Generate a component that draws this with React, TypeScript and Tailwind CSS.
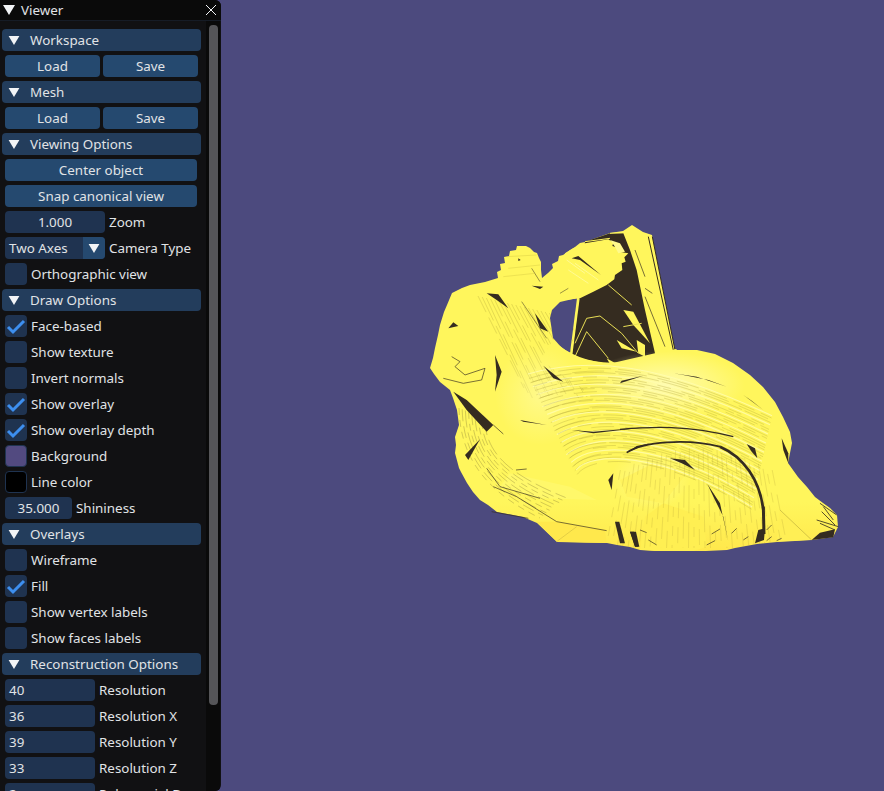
import type { ReactNode } from "react";

// Dear ImGui style "Viewer" panel on top of a mesh viewport.
const DARK = "#352c20";
const YELLOW = "#fff65c";

function Arrow({ className }: { className: string }) {
  return (
    <svg viewBox="0 0 12 10" className={className}>
      <polygon points="0,0 12,0 6,10" fill="#f2f4f6" />
    </svg>
  );
}

function Header({ title }: { title: string }) {
  return (
    <div className="-mx-[3px] flex h-[22px] w-[199px] shrink-0 items-center rounded-[4px] bg-[#233d5c]">
      <Arrow className="ml-[6px] h-[9px] w-[12px]" />
      <span className="ml-[10px] pt-[2px]">{title}</span>
    </div>
  );
}

function Button({ label, className }: { label: string; className: string }) {
  return (
    <div className={`flex h-[22px] shrink-0 items-center justify-center rounded-[4px] bg-[#25496f] pt-[2px] ${className}`}>
      {label}
    </div>
  );
}

function Check({ label, on }: { label: string; on?: boolean }) {
  return (
    <div className="flex h-[22px] shrink-0 items-center">
      <div className="flex h-[22px] w-[22px] items-center justify-center rounded-[4px] bg-[#1f3350]">
        {on && (
          <svg viewBox="0 0 22 22" className="h-[22px] w-[22px]">
            <path d="M3 12 L8 17 L19 6" fill="none" stroke="#3d8fef" strokeWidth="3" />
          </svg>
        )}
      </div>
      <span className="ml-[4px] pt-[2px]">{label}</span>
    </div>
  );
}

function Swatch({ label, className }: { label: string; className: string }) {
  return (
    <div className="flex h-[22px] shrink-0 items-center">
      <div className={`h-[22px] w-[22px] rounded-[4px] border border-[#1f3350] ${className}`} />
      <span className="ml-[4px] pt-[2px]">{label}</span>
    </div>
  );
}

function Field({ value, label, className, center }: { value: string; label: string; className: string; center?: boolean }) {
  return (
    <div className="flex h-[22px] shrink-0 items-center whitespace-nowrap">
      <div className={`flex h-[22px] shrink-0 items-center rounded-[4px] bg-[#1f3350] pt-[2px] ${center ? "justify-center" : "pl-[4px]"} ${className}`}>
        {value}
      </div>
      <span className="ml-[4px] pt-[2px]">{label}</span>
    </div>
  );
}

function Panel() {
  return (
    <aside className="flex h-[791px] w-[221px] shrink-0 flex-col overflow-hidden rounded-r-[6px] bg-[#111113] font-['Noto_Sans',sans-serif] text-[13.4px] leading-none text-[#e0e3e6]">
      <div className="flex h-[21px] shrink-0 items-center border-b border-[#161c26] bg-[#0a0a0a]">
        <Arrow className="ml-[3px] h-[10px] w-[12px]" />
        <span className="ml-[6px] pt-[2px]">Viewer</span>
        <svg viewBox="0 0 12 12" className="ml-auto mr-[4px] h-[12px] w-[12px]">
          <path d="M1 1 L11 11 M11 1 L1 11" stroke="#f2f4f6" strokeWidth="1" />
        </svg>
      </div>
      <div className="flex min-h-0 flex-1">
        <div className="flex w-[206px] shrink-0 flex-col gap-[4px] overflow-hidden pl-[5px] pt-[8px]">
          <Header title="Workspace" />
          <div className="flex shrink-0 gap-[3px]">
            <Button label="Load" className="w-[95px]" />
            <Button label="Save" className="w-[95px]" />
          </div>
          <Header title="Mesh" />
          <div className="flex shrink-0 gap-[3px]">
            <Button label="Load" className="w-[95px]" />
            <Button label="Save" className="w-[95px]" />
          </div>
          <Header title="Viewing Options" />
          <Button label="Center object" className="w-[192px]" />
          <Button label="Snap canonical view" className="w-[192px]" />
          <Field value="1.000" label="Zoom" className="w-[100px]" center />
          <div className="flex h-[22px] shrink-0 items-center">
            <div className="flex h-[22px] w-[100px] items-center overflow-hidden rounded-[4px] bg-[#1f3350]">
              <span className="pl-[4px] pt-[2px]">Two Axes</span>
              <div className="ml-auto flex h-[22px] w-[22px] items-center justify-center bg-[#25496f]">
                <Arrow className="h-[9px] w-[12px]" />
              </div>
            </div>
            <span className="ml-[4px] pt-[2px]">Camera Type</span>
          </div>
          <Check label="Orthographic view" />
          <Header title="Draw Options" />
          <Check label="Face-based" on />
          <Check label="Show texture" />
          <Check label="Invert normals" />
          <Check label="Show overlay" on />
          <Check label="Show overlay depth" on />
          <Swatch label="Background" className="bg-[#524a80]" />
          <Swatch label="Line color" className="bg-black" />
          <Field value="35.000" label="Shininess" className="w-[67px]" center />
          <Header title="Overlays" />
          <Check label="Wireframe" />
          <Check label="Fill" on />
          <Check label="Show vertex labels" />
          <Check label="Show faces labels" />
          <Header title="Reconstruction Options" />
          <Field value="40" label="Resolution" className="w-[90px]" />
          <Field value="36" label="Resolution X" className="w-[90px]" />
          <Field value="39" label="Resolution Y" className="w-[90px]" />
          <Field value="33" label="Resolution Z" className="w-[90px]" />
          <Field value="2" label="Polynomial D" className="w-[90px]" />
        </div>
        <div className="w-[14px] shrink-0 bg-[#0a0a0a] pl-[3px] pt-[4px]">
          <div className="h-[680px] w-[9px] rounded-[4px] bg-[#555558]" />
        </div>
      </div>
    </aside>
  );
}

const outline =
  "557,542 537,523 523,517 497,512 488,505 480,500 473,492 467,483 461,472 459,468 455,453 456,445 455,437 459,425 457,410 453,398 450,390 440,382 434,374 430,368 433,358 435,348 438,335 440,325 444,312 447,305 452,293 462,288 470,285 485,282 498,278 497,272 501,270 500,264 505,263 504,257 509,256 510,251 516,250 517,246 526,246 530,248 534,252 537,253 539,258 541,262 541,270 542,278 548,273 553,268 552,264 558,261 559,256 563,255 570,250 575,247 580,243 585,242 610,233 623,231 632,225 643,232 652,235 675,350 697,350 715,354 733,363 750,375 763,387 775,402 783,417 790,432 792,443 790,453 788,463 798,477 807,487 815,497 823,503 830,508 837,515 838,527 833,537 812,540 795,541 777,542 757,544 735,548 727,550 706,551 655,551 640,550 630,547 617,545 607,543";

// Each group below uses coordinates read off a 3x crop of the mesh.
function Crop({ x, y, children }: { x: number; y: number; children: ReactNode }) {
  return <g transform={`translate(${x} ${y}) scale(0.3333)`}>{children}</g>;
}

function Sliver({ d }: { d: string }) {
  return <polygon points={d} fill={DARK} />;
}

function Thin({ d, w = 1.5, c = DARK }: { d: string; w?: number; c?: string }) {
  return <path d={d} fill="none" stroke={c} strokeWidth={w} />;
}

const backStrands = Array.from({ length: 42 }, (_, i) => {
  const t = 6 + i * 2.4;
  const wobble = (i * 7) % 5;
  return `M${528 + i * 1.2} ${368 + t + wobble} C ${590 + wobble} ${350 + t}, 660 ${358 + t * 0.9}, ${772 - i * 0.5} ${410 + t * 0.95}`;
});

const headStrands = Array.from({ length: 22 }, (_, i) => {
  const x = 478 + i * 4.2;
  return `M${x} ${296 + i} L${x + 46} ${388 + ((i * 5) % 11)}`;
});

const edgeArcs = Array.from({ length: 9 }, (_, i) => {
  const d = i * 3.2;
  return `M${459 + d} ${408 + d * 0.4} C ${460 + d} ${450}, ${478 + d} ${488 - d * 0.6}, ${540 + d} ${518 - d * 0.8}`;
});

const rumpFan = Array.from({ length: 34 }, (_, i) => {
  const x = 606 + i * 5.5;
  const top = 470 - Math.sin((i / 33) * Math.PI) * 22;
  return `M${x + (16 - i) * 0.9} ${top + ((i * 3) % 9)} L${x} ${548}`;
});

function Bunny() {
  return (
    <svg viewBox="221 0 663 791" className="block h-[791px] w-[663px]">
      <defs>
        <linearGradient id="body" x1="0" y1="0" x2="0" y2="1">
          <stop offset="0" stopColor={YELLOW} />
          <stop offset="0.85" stopColor={YELLOW} />
          <stop offset="1" stopColor="#ffe84c" />
        </linearGradient>
        <radialGradient id="glow" cx="0.5" cy="0.5" r="0.5">
          <stop offset="0" stopColor="#fffcb0" />
          <stop offset="1" stopColor="#fffcb0" stopOpacity="0" />
        </radialGradient>
        <clipPath id="shape">
          <polygon points={outline} />
        </clipPath>
      </defs>
      <polygon points={outline} fill="url(#body)" />

      <g clipPath="url(#shape)">
        {headStrands.map((d, i) => (
          <path key={i} d={d} fill="none" stroke="#b5a83a" strokeWidth="0.5" strokeDasharray={`${18 + (i % 4) * 8} 6`} opacity="0.7" />
        ))}
      </g>

      {/* hole between the ears and the back */}
      <path d="M577 298 L560 302 L552 310 L550 318 L553 338 L562 348 L570 353 Z" fill="#4c4a7e" />

      {/* far ear, dark inside faces */}
      <Crop x={565} y={220}>
        <polygon points="42,235 60,65 135,40 175,40 195,90 215,150 240,270 270,400 130,432 20,410" fill={DARK} />
        <Thin d="M42 235 L20 405" w={4} c={YELLOW} />
        <Thin d="M60 65 L135 55 M135 40 L175 38" w={3} c={YELLOW} />
        <polygon points="175,270 205,275 255,370 205,315" fill={YELLOW} />
        <polygon points="155,360 215,395 170,385" fill={YELLOW} />
        <polygon points="215,360 240,375 240,410 220,400" fill={YELLOW} />
        <polygon points="125,415 155,432 135,432" fill={YELLOW} />
        <Thin d="M30 370 L65 295 L105 288 L170 340 L220 400" w={3} c="#e8de55" />
        <Thin d="M30 410 L65 335 L130 415" w={3} c="#e8de55" />
        <Thin d="M130 195 L200 255 M175 320 L230 310" w={3} c="#e8de55" />
        <Thin d="M250 50 L325 390 M262 50 L330 390" w={3} />
        <Thin d="M240 205 L262 220 M240 230 L300 380 M210 90 L240 170" w={2} />
        {/* near ear lobe sits in front */}
        <polygon points="0,100 25,85 60,70 130,58 145,68 142,78 165,85 162,95 190,100 178,112 182,125 170,130 172,150 150,165 148,178 125,195 85,215 45,235 0,240" fill={YELLOW} />
        <polygon points="135,60 165,70 180,95 160,100 150,80" fill="#fffa8c" />
        <polygon points="20,115 40,108 108,165 45,120" fill={DARK} />
        <Thin d="M10 150 L70 190 M30 130 L100 180 M5 120 L60 160" w={2} c="#fffcb0" />
      </Crop>

      {/* body fades in over the bottom of the ear */}
      <path d="M553 340 C 575 362, 610 368, 640 358 L676 349 L700 370 L600 400 L540 360 Z" fill={YELLOW} />
      <ellipse cx="665" cy="385" rx="80" ry="34" fill="url(#glow)" />
      <ellipse cx="650" cy="480" rx="40" ry="30" fill="url(#glow)" opacity="0.5" />
      <ellipse cx="540" cy="395" rx="45" ry="50" fill="url(#glow)" opacity="0.55" />

      <g clipPath="url(#shape)">
        {/* flat facets low on the body */}
        <Crop x={430} y={380}>
          <polygon points="380,485 530,492 525,450 380,425 320,425" fill="#ffe84c" />
          <polygon points="210,320 330,355 500,360 420,320 240,280" fill="#fff86a" />
        </Crop>
        <Crop x={620} y={330}>
          <polygon points="60,660 75,560 130,520 250,560 260,650 205,668" fill="#ffef52" />
          <polygon points="0,450 100,400 200,430 130,520 20,500" fill="#fff35e" />
          <polygon points="480,540 575,630 470,635" fill="#ffef55" />
        </Crop>

        {/* fine strands along the back */}
        {backStrands.map((d, i) => (
          <path
            key={i}
            d={d}
            fill="none"
            stroke={i % 4 === 0 ? "#fffcb0" : "#a89a35"}
            strokeWidth={i % 4 === 0 ? 1.2 : 0.5}
            strokeDasharray={i % 4 === 0 ? undefined : `${14 + (i % 5) * 9} ${3 + (i % 3) * 4}`}
            opacity={i % 4 === 0 ? 0.8 : 0.6}
          />
        ))}
        {edgeArcs.map((d, i) => (
          <path key={i} d={d} fill="none" stroke="#6f6430" strokeWidth="0.5" strokeDasharray={`${7 + (i % 3) * 5} 5`} opacity="0.6" />
        ))}
        {rumpFan.map((d, i) => (
          <path key={i} d={d} fill="none" stroke="#a89a35" strokeWidth="0.5" strokeDasharray={`${10 + (i % 4) * 6} 9`} opacity="0.45" />
        ))}
      </g>

      {/* head */}
      <Crop x={420} y={215}>
        <Sliver d="200,235 235,238 265,280 230,255" />
        <Sliver d="85,340 100,322 115,333" />
        <Sliver d="335,212 370,215 360,222" />
        <Sliver d="345,295 385,350 360,340" />
        <Sliver d="370,452 430,500 400,490" />
        <Sliver d="225,420 245,470 225,530 230,480" />
        <Sliver d="295,130 302,135 295,138" />
        <Thin d="M95 425 L120 440 L105 455 L135 480 L195 460 L185 495 L130 505 L70 490" w={2} />
        <Thin d="M420 235 L445 220 M305 260 L380 370 M335 160 L360 200" w={1.5} />
        <Thin d="M265 160 L360 150 M260 125 L350 120 M250 185 L345 175" w={1} c="#c9bb3c" />
      </Crop>

      {/* flank and haunch, left side */}
      <Crop x={430} y={380}>
        <Sliver d="70,35 110,60 190,135 170,155 110,90" />
        <Sliver d="105,225 150,178 115,240" />
        <Sliver d="270,120 350,135 280,125" />
        <Sliver d="425,150 490,155 660,140 490,160" />
        <Sliver d="590,218 620,198 660,190 620,205" />
        <Sliver d="535,300 550,280 545,330" />
        <Sliver d="555,425 570,490 585,490 568,425" />
        <Sliver d="600,455 615,500 625,500 612,455" />
        <Thin d="M190 320 L260 350 L380 425 L530 452" w={2} />
        <Thin d="M170 265 L210 320 L330 355 M258 270 L290 267" w={2} />
        <Thin d="M190 135 L220 162 M185 395 L295 415" w={2} />
        <Thin d="M380 485 L440 440" w={1.5} c="#c9b53c" />
      </Crop>

      {/* rump and tail */}
      <Crop x={620} y={330}>
        <Sliver d="160,130 230,140 320,170 265,150 190,135" />
        <Sliver d="370,195 430,240 395,212" />
        <Sliver d="0,160 70,137 5,152" />
        <Sliver d="150,385 195,390 225,420 185,400" />
        <Sliver d="262,462 300,520 325,635 310,560 285,510" />
        <Sliver d="380,342 405,355 412,385 395,365" />
        <Sliver d="485,325 505,370 505,400 490,360" />
        <Sliver d="405,640 432,630 435,595 415,600" />
        <Sliver d="575,630 600,608 645,598 640,622" />
        <Sliver d="30,605 45,650 58,650 48,605" />
        <Thin d="M0 298 C 100 290, 200 285, 340 320" w={4} />
        <Thin d="M20 368 C 70 335, 200 325, 300 350" w={5} />
        <Thin d="M300 350 C 370 380, 420 450, 430 540" w={8} />
        <Thin d="M430 530 L432 612" w={9} />
        <Thin d="M600 520 L650 555 M610 530 L640 570 M590 570 L655 590 M600 580 L645 600 M605 545 L645 585" w={2.5} />
        <Thin d="M60 600 L80 608 M85 630 L110 645 M260 645 L285 632 M275 612 L300 597 M335 610 L350 595 M370 630 L385 620 M440 600 L455 585 M440 632 L455 620 M470 632 L485 625" w={2} />
        <Thin d="M480 540 L575 630" w={1.5} c="#a89a35" />
      </Crop>
    </svg>
  );
}

export default function App() {
  return (
    <div className="flex h-[791px] w-[884px] overflow-hidden bg-[#4c4a7e]">
      <Panel />
      <Bunny />
    </div>
  );
}
